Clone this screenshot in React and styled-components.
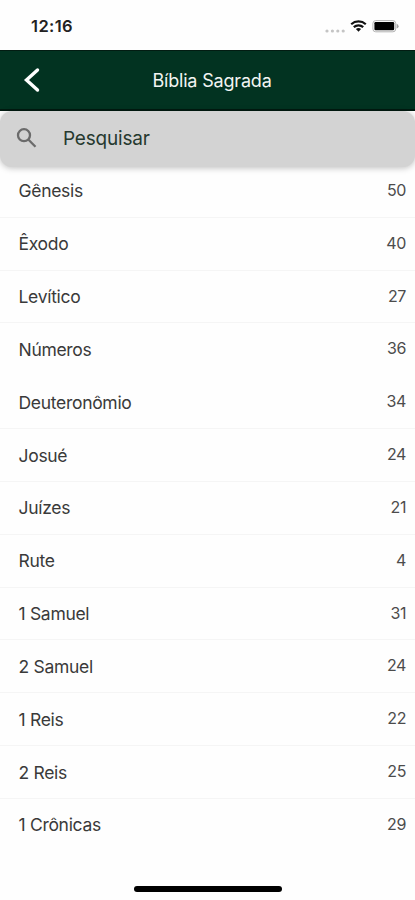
import React from 'react';
import styled, { createGlobalStyle } from 'styled-components';

const GlobalStyle = createGlobalStyle`
  * {
    box-sizing: border-box;
  }

  body {
    margin: 0;
    background: #fefefe;
    font-family: Inter, 'Liberation Sans', sans-serif;
  }
`;

const Screen = styled.div`
  display: flex;
  flex-direction: column;
  height: 900px;
  overflow: hidden;
  background: #fefefe;
`;

const StatusBar = styled.div`
  display: flex;
  justify-content: space-between;
  align-items: center;
  flex: none;
  height: 50px;
  padding: 2px 15px 0 31px;
`;

const Clock = styled.span`
  font-size: 16.5px;
  font-weight: 600;
  letter-spacing: 0.4px;
  color: #222;
`;

const StatusIcons = styled.div`
  display: flex;
  align-items: center;
  padding-top: 1px;
`;

const Header = styled.header`
  display: grid;
  grid-template-columns: 64px 1fr 55px;
  align-items: center;
  flex: none;
  height: 61px;
  background: #023321;
  border-top: 1px solid #021c12;
  border-bottom: 2px solid #011a10;
`;

const BackButton = styled.button`
  display: flex;
  padding: 0 0 0 22px;
  border: 0;
  background: none;
`;

const Title = styled.h1`
  margin: 0;
  font-size: 18px;
  font-weight: 400;
  letter-spacing: -0.18px;
  text-align: center;
  color: #f2f5f3;
`;

const SearchBar = styled.div`
  position: relative;
  display: flex;
  align-items: center;
  flex: none;
  height: 56px;
  margin-bottom: -2px;
  padding: 0 16px 2px;
  gap: 26px;
  border-radius: 12px;
  background: #d3d3d3;
  box-shadow: 0 1px 6px rgba(0, 0, 0, 0.25);
`;

const SearchLabel = styled.span`
  font-size: 19px;
  letter-spacing: -0.2px;
  color: #26392f;
`;

const BookList = styled.ul`
  flex: 1;
  margin: 0;
  padding: 0;
  list-style: none;
`;

const BookRow = styled.li`
  display: flex;
  justify-content: space-between;
  align-items: center;
  height: 52.83px;
  padding: 0 9px 0 18.5px;
  border-bottom: 1px solid ${(props) => (props.$divider ? '#f5f5f5' : 'transparent')};
`;

const BookName = styled.span`
  font-size: 17.5px;
  letter-spacing: -0.3px;
  color: #3a3a3a;
`;

const Chapters = styled.span`
  padding-bottom: 2px;
  font-size: 16px;
  letter-spacing: -0.4px;
  color: #4c4c4c;
`;

const HomeIndicator = styled.div`
  flex: none;
  align-self: center;
  width: 148px;
  height: 6px;
  margin-bottom: 8px;
  border-radius: 3px;
  background: #000;
`;

const books = [
  { name: 'Gênesis', chapters: 50 },
  { name: 'Êxodo', chapters: 40 },
  { name: 'Levítico', chapters: 27 },
  { name: 'Números', chapters: 36, last: true },
  { name: 'Deuteronômio', chapters: 34 },
  { name: 'Josué', chapters: 24 },
  { name: 'Juízes', chapters: 21 },
  { name: 'Rute', chapters: 4 },
  { name: '1 Samuel', chapters: 31 },
  { name: '2 Samuel', chapters: 24 },
  { name: '1 Reis', chapters: 22 },
  { name: '2 Reis', chapters: 25 },
  { name: '1 Crônicas', chapters: 29, last: true },
];

function StatusGlyphs() {
  return (
    <svg width="76" height="16" viewBox="0 0 76 16">
      <g fill="#c4c4c4">
        <circle cx="3" cy="12" r="1.6" />
        <circle cx="8.4" cy="12" r="1.6" />
        <circle cx="13.8" cy="12" r="1.6" />
        <circle cx="19.2" cy="12" r="1.6" />
      </g>
      <g fill="none" stroke="#111" strokeWidth="2.2">
        <path d="M27.2 5.2a11 11 0 0 1 14.6 0" />
        <path d="M29.8 8.1a7 7 0 0 1 9.4 0" />
      </g>
      <path d="M34.5 12.8l-2.6-2.7a3.9 3.9 0 0 1 5.2 0z" fill="#111" />
      <rect x="48.9" y="1.6" width="22.8" height="11.2" rx="2.8" fill="none" stroke="#b3b3b3" />
      <rect x="50.4" y="3.1" width="19.8" height="8.2" rx="1.2" fill="#000" />
      <path d="M72.6 4.8q2 0.8 2 2.4t-2 2.4z" fill="#a5a5a5" />
    </svg>
  );
}

function App() {
  return (
    <Screen>
      <GlobalStyle />
      <StatusBar>
        <Clock>12:16</Clock>
        <StatusIcons>
          <StatusGlyphs />
        </StatusIcons>
      </StatusBar>

      <Header>
        <BackButton aria-label="Voltar">
          <svg width="18" height="26" viewBox="0 0 18 26" fill="none" stroke="#fff" strokeWidth="3.4">
            <path d="M15.5 3L4.5 13l11 10" strokeLinecap="round" />
          </svg>
        </BackButton>
        <Title>Bíblia Sagrada</Title>
      </Header>

      <SearchBar>
        <svg width="21" height="21" viewBox="0 0 21 21" fill="none" stroke="#6b6b6b" strokeWidth="2.3">
          <circle cx="8" cy="7.2" r="6" />
          <path d="M12.3 11.5l7.2 7.2" />
        </svg>
        <SearchLabel>Pesquisar</SearchLabel>
      </SearchBar>

      <BookList>
        {books.map((book) => (
          <BookRow key={book.name} $divider={!book.last}>
            <BookName>{book.name}</BookName>
            <Chapters>{book.chapters}</Chapters>
          </BookRow>
        ))}
      </BookList>

      <HomeIndicator />
    </Screen>
  );
}

export default App;
